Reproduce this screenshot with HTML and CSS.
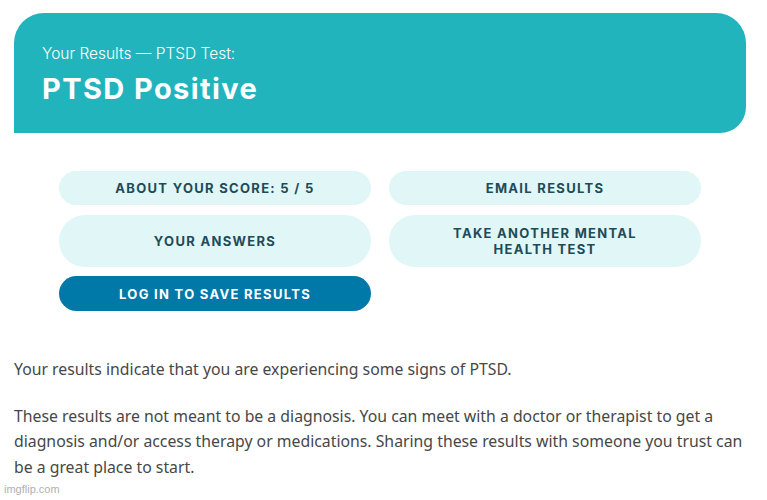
FILE: index.html
```html
<!DOCTYPE html>
<html>
<head>
<meta charset="utf-8">
<link rel="stylesheet" href="styles.css">
</head>
<body>
<div class="page">
  <header class="hero">
    <div class="hero-sub">Your Results — PTSD Test:</div>
    <h1 class="hero-title">PTSD Positive</h1>
  </header>
  <div class="actions">
    <button class="btn btn-light">About your score: 5 / 5</button>
    <button class="btn btn-light">Email results</button>
    <button class="btn btn-light btn-tall">Your answers</button>
    <button class="btn btn-light btn-tall">Take another mental<br>health test</button>
    <button class="btn btn-dark">Log in to save results</button>
  </div>
  <div class="body-text">
    <p>Your results indicate that you are experiencing some signs of PTSD.</p>
    <p>These results are not meant to be a diagnosis. You can meet with a doctor or therapist to get a diagnosis and/or access therapy or medications. Sharing these results with someone you trust can be a great place to start.</p>
  </div>
</div>
<div class="watermark">imgflip.com</div>
</body>
</html>
```
FILE: styles.css
```css
html, body {
  margin: 0;
  padding: 0;
  background: #ffffff;
}
body {
  width: 767px;
  height: 500px;
  overflow: hidden;
  position: relative;
  font-family: "Noto Sans", "Open Sans", sans-serif;
}
.page {
  padding: 13px 21px 0 14px;
}
.hero {
  background: #21b4bc;
  border-radius: 30px 30px 26px 0;
  height: 120px;
  box-sizing: border-box;
  padding: 32px 28px 0 28px;
  color: #ffffff;
}
.hero-sub {
  font-family: Inter, "Liberation Sans", sans-serif;
  font-weight: 300;
  font-size: 15.5px;
  line-height: 18px;
}
.hero-title {
  margin: 9px 0 0 0;
  font-family: Inter, "Liberation Sans", sans-serif;
  font-weight: 700;
  font-size: 29px;
  line-height: 34px;
  letter-spacing: 1.4px;
}
.actions {
  display: grid;
  grid-template-columns: 312px 312px;
  column-gap: 18px;
  row-gap: 10px;
  padding: 38px 0 0 45px;
}
.btn {
  border: none;
  border-radius: 18px;
  font-family: Inter, "Liberation Sans", sans-serif;
  font-weight: 700;
  font-size: 13px;
  line-height: 16px;
  letter-spacing: 1.3px;
  text-transform: uppercase;
  padding: 0 12px;
  height: 34px;
  display: flex;
  align-items: center;
  justify-content: center;
  text-align: center;
}
.btn-light {
  background: #e1f6f7;
  color: #1e4b58;
}
.btn-tall {
  height: 52px;
  border-radius: 26px;
}
.btn-dark {
  background: #0078a8;
  color: #ffffff;
  height: 35px;
  margin-top: -1px;
}
.body-text {
  padding-top: 46px;
  margin-right: -5px;
  color: #474747;
  font-size: 15.8px;
  line-height: 25.5px;
}
.body-text p {
  margin: 0 0 21px 0;
}
.watermark {
  position: absolute;
  left: 4px;
  top: 483px;
  font-family: "Liberation Sans", sans-serif;
  font-size: 11px;
  color: #b0b0b0;
}
```
